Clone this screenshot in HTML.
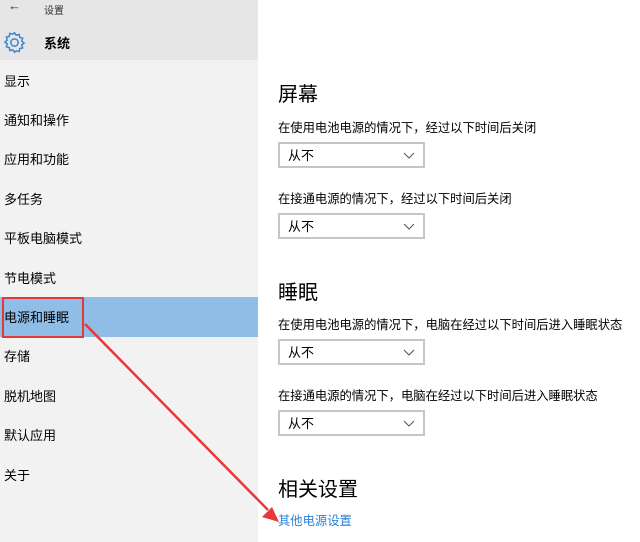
<!DOCTYPE html>
<html><head><meta charset="utf-8"><style>
*{margin:0;padding:0;box-sizing:border-box}
body{width:640px;height:542px;overflow:hidden;background:#fff;font-family:"Liberation Sans","Noto Sans CJK SC",sans-serif;color:#000;position:relative}
.hdr{position:absolute;left:0;top:0;width:258px;height:60px;background:#e6e6e6}
.side{position:absolute;left:0;top:60px;width:258px;height:482px;background:#f2f2f2}
.it{position:absolute;left:4px;font-size:13px}
.sel{position:absolute;left:0;top:297px;width:258px;height:40px;background:#8fbde6}
.red{position:absolute;left:2px;top:297px;width:82px;height:41px;border:2px solid #e03a3a}
.t{position:absolute;left:278px}
.h{font-size:20px}
.l{font-size:12.3px}
.dd{position:absolute;left:278px;width:147px;height:26px;border:2px solid #c6c6c6;background:#fff;font-size:13px;padding:1px 0 0 8px}
.dd svg{position:absolute;right:8px;top:8px}
</style></head><body>
<div class="hdr"></div>
<div class="side"></div>
<div style="position:absolute;left:8px;top:-2px;font-size:13px;color:#333">←</div>
<div style="position:absolute;left:44px;top:2px;font-size:10px;color:#333">设置</div>
<svg style="position:absolute;left:3px;top:31px" width="23" height="23" viewBox="0 0 20 20"><path d="M10 1.5l1.5 2.2 2.6-.7.4 2.6 2.6.6-.8 2.5 2 1.8-2 1.6.8 2.6-2.6.6-.4 2.6-2.6-.7L10 18.5l-1.5-2.2-2.6.7-.4-2.6-2.6-.6.8-2.6-2-1.6 2-1.8-.8-2.5 2.6-.6.4-2.6 2.6.7z" fill="none" stroke="#3a86d0" stroke-width="1.3"/><circle cx="10" cy="10" r="3.2" fill="none" stroke="#3a86d0" stroke-width="1.3"/></svg>
<div style="position:absolute;left:44px;top:33px;font-size:13px;font-weight:bold">系统</div>
<div class="sel"></div>
<div class="it" style="top:71px">显示</div>
<div class="it" style="top:110px">通知和操作</div>
<div class="it" style="top:149px">应用和功能</div>
<div class="it" style="top:189px">多任务</div>
<div class="it" style="top:228px">平板电脑模式</div>
<div class="it" style="top:268px">节电模式</div>
<div class="it" style="top:307px">电源和睡眠</div>
<div class="it" style="top:346px">存储</div>
<div class="it" style="top:386px">脱机地图</div>
<div class="it" style="top:425px">默认应用</div>
<div class="it" style="top:465px">关于</div>
<div class="red"></div>
<div class="t h" style="top:78px">屏幕</div>
<div class="t l" style="top:118px">在使用电池电源的情况下，经过以下时间后关闭</div>
<div class="dd" style="top:142px">从不<svg width="12" height="8"><path d="M1 1l5 5 5-5" fill="none" stroke="#555" stroke-width="1"/></svg></div>
<div class="t l" style="top:189px">在接通电源的情况下，经过以下时间后关闭</div>
<div class="dd" style="top:213px">从不<svg width="12" height="8"><path d="M1 1l5 5 5-5" fill="none" stroke="#555" stroke-width="1"/></svg></div>
<div class="t h" style="top:276px">睡眠</div>
<div class="t l" style="top:315px">在使用电池电源的情况下，电脑在经过以下时间后进入睡眠状态</div>
<div class="dd" style="top:339px">从不<svg width="12" height="8"><path d="M1 1l5 5 5-5" fill="none" stroke="#555" stroke-width="1"/></svg></div>
<div class="t l" style="top:386px">在接通电源的情况下，电脑在经过以下时间后进入睡眠状态</div>
<div class="dd" style="top:410px">从不<svg width="12" height="8"><path d="M1 1l5 5 5-5" fill="none" stroke="#555" stroke-width="1"/></svg></div>
<div class="t h" style="top:473px">相关设置</div>
<div class="t" style="top:511px;font-size:12.3px;color:#2a7fd4">其他电源设置</div>
<svg style="position:absolute;left:0;top:0" width="640" height="542"><line x1="85" y1="324" x2="268" y2="510" stroke="#e8383a" stroke-width="2.5"/><path d="M279 522l-17-5 10-10z" fill="#e8383a"/></svg>
</body></html>
